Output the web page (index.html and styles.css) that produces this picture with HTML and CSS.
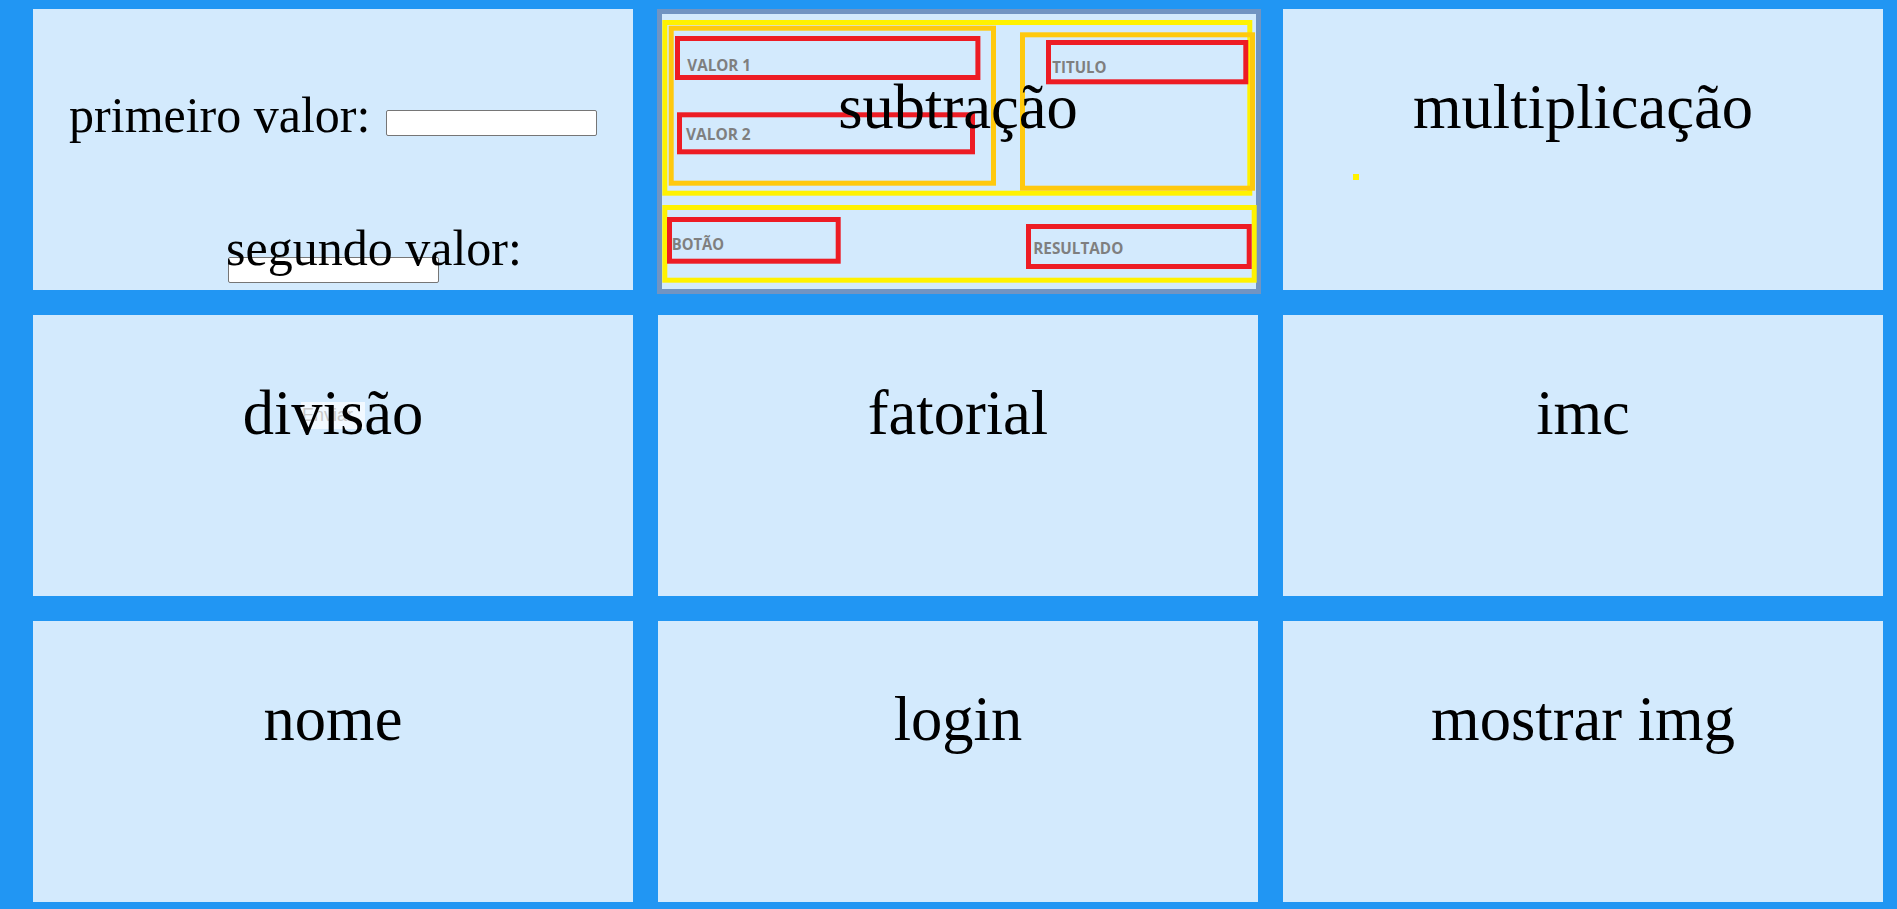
FILE: index.html
```html
<!DOCTYPE html>
<html lang="pt-BR">
<head>
<meta charset="utf-8">
<title>Calculadoras</title>
<link rel="stylesheet" href="styles.css">
</head>
<body>
<main class="grid">
  <section class="card card-form">
    <p class="field field-first">primeiro valor: <input class="num" type="text"></p>
    <p class="field field-second">segundo valor:</p>
    <input class="num num-second" type="text">
  </section>

  <section class="card card-sketch">
    <svg class="sketch" width="604" height="285" viewBox="0 0 604 285" xmlns="http://www.w3.org/2000/svg">
      <rect x="0" y="0" width="604" height="285" fill="#d3eafd"/>
      <rect x="2.5" y="2.5" width="599" height="280" fill="none" stroke="#7194c2" stroke-width="5"/>
      <rect x="7.8" y="13.5" width="585" height="170.7" fill="none" stroke="#fff200" stroke-width="5"/>
      <rect x="14.2" y="19.2" width="322.3" height="155" fill="none" stroke="#ffc90e" stroke-width="5"/>
      <rect x="365.5" y="25.8" width="230" height="153.4" fill="none" stroke="#ffc90e" stroke-width="5"/>
      <rect x="20.5" y="29.5" width="300.4" height="39" fill="none" stroke="#ed1c24" stroke-width="5"/>
      <rect x="22.5" y="105.8" width="293" height="37" fill="none" stroke="#ed1c24" stroke-width="5"/>
      <rect x="391.5" y="33.5" width="197.3" height="39.3" fill="none" stroke="#ed1c24" stroke-width="5"/>
      <rect x="7.8" y="198.5" width="589.4" height="72.7" fill="none" stroke="#fff200" stroke-width="5"/>
      <rect x="12.5" y="210.5" width="168.7" height="41.7" fill="none" stroke="#ed1c24" stroke-width="5"/>
      <rect x="371.5" y="217.5" width="220.7" height="40" fill="none" stroke="#ed1c24" stroke-width="5"/>
      <g class="sketch-text">
        <text x="30.3" y="62" textLength="63.7" lengthAdjust="spacingAndGlyphs">VALOR 1</text>
        <text x="29" y="131" textLength="64.7" lengthAdjust="spacingAndGlyphs">VALOR 2</text>
        <text x="395.3" y="63.7" textLength="54.3" lengthAdjust="spacingAndGlyphs">TITULO</text>
        <text x="14.7" y="241" textLength="52.3" lengthAdjust="spacingAndGlyphs">BOTÃO</text>
        <text x="376.3" y="245.3" textLength="90" lengthAdjust="spacingAndGlyphs">RESULTADO</text>
      </g>
    </svg>
    <h2 class="card-title">subtração</h2>
  </section>

  <section class="card">
    <h2 class="card-title">multiplicação</h2>
    <span class="dot"></span>
  </section>

  <section class="card">
    <button class="ghost-btn" type="button">Enviar</button>
    <h2 class="card-title">divisão</h2>
  </section>

  <section class="card">
    <h2 class="card-title">fatorial</h2>
  </section>

  <section class="card">
    <h2 class="card-title">imc</h2>
  </section>

  <section class="card">
    <h2 class="card-title">nome</h2>
  </section>

  <section class="card">
    <h2 class="card-title">login</h2>
  </section>

  <section class="card">
    <h2 class="card-title">mostrar img</h2>
  </section>
</main>
</body>
</html>
```

FILE: styles.css
```css
html, body {
  margin: 0;
  padding: 0;
}

body {
  background: #2196f3;
  font-family: "Liberation Serif", "Times New Roman", serif;
  color: #000;
  width: 1897px;
  height: 909px;
  overflow: hidden;
}

.grid {
  display: grid;
  grid-template-columns: repeat(3, 600px);
  grid-auto-rows: 281px;
  gap: 25px;
  padding: 9px 14px 0 33px;
}

.card {
  background: #d3eafd;
  position: relative;
}

.card-title {
  position: relative;
  z-index: 1;
  margin: 0;
  padding-top: 62px;
  font-family: "Liberation Serif", "Times New Roman", serif;
  font-weight: 400;
  font-size: 62.5px;
  line-height: 72px;
  text-align: center;
  white-space: nowrap;
}

/* first card: inputs */
.card-form {
  display: flex;
  flex-direction: column;
}

.field {
  margin: 0;
  font-size: 50px;
  line-height: 58px;
  text-align: center;
  white-space: nowrap;
}

.field-first {
  margin-top: 76.5px;
}

.field-second {
  position: relative;
  z-index: 1;
  margin-top: 75px;
  padding-left: 82px;
}

.num {
  box-sizing: border-box;
  width: 211px;
  height: 26px;
  margin: 0 0 0 3px;
  padding: 0 3px;
  border: 1px solid #767676;
  border-radius: 2px;
  background: #fff;
  font: 16.7px "Liberation Sans", Arial, sans-serif;
  vertical-align: 3.5px;
}

.num-second {
  display: block;
  margin: -19.5px auto 0;
}

/* second card: wireframe picture behind the title */
.sketch {
  position: absolute;
  left: -1px;
  top: 0;
  display: block;
}

.sketch-text text {
  font-family: "Open Sans", "Liberation Sans", sans-serif;
  font-weight: 700;
  font-size: 16.5px;
  fill: #7f7f7f;
}

/* small stray marks */
.dot {
  position: absolute;
  left: 70px;
  top: 165px;
  width: 6px;
  height: 6px;
  background: #fff200;
}

.ghost-btn {
  position: absolute;
  left: 268px;
  top: 87px;
  width: 64px;
  height: 27px;
  padding: 0 0 0 1px;
  border: none;
  background: rgba(255, 255, 255, 0.7);
  color: #c9c9c9;
  font: 18px "Liberation Sans", Arial, sans-serif;
  text-align: left;
}
```
